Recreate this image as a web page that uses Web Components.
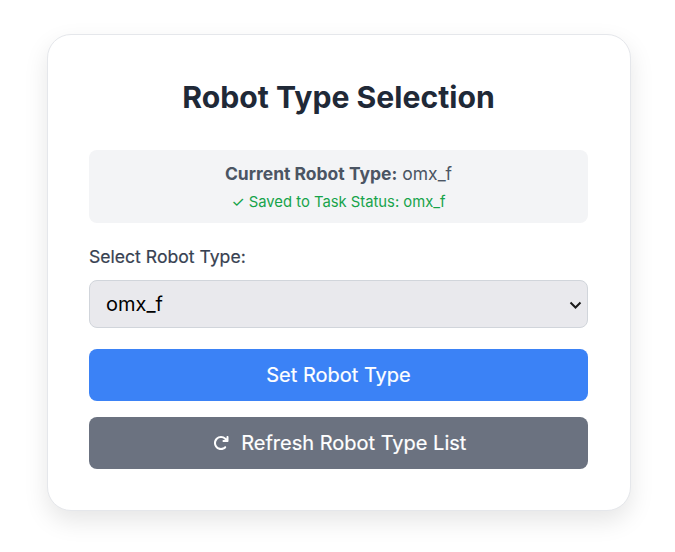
<!DOCTYPE html>
<html>
<head>
<meta charset="utf-8">
<style>
  body { margin: 0; background: #fff; font-family: Inter, "Liberation Sans", sans-serif; }
</style>
</head>
<body>
<robot-page></robot-page>
<script>
class StatusBox extends HTMLElement {
    constructor() {
        super();
        this.attachShadow({ mode: 'open' });
        this.shadowRoot.innerHTML = `
            <style>
                :host { display: block; background: #f3f4f6; border-radius: 8px; height: 73px; box-sizing: border-box; padding-top: 12px; text-align: center; }
                .current { font-size: 17.5px; line-height: 24px; color: #4b5563; }
                .current b { font-weight: 700; }
                .saved { margin-top: 4px; font-size: 14.8px; line-height: 24px; color: #16a34a; }
            </style>
            <div class="current"><b>Current Robot Type:</b> <slot></slot></div>
            <div class="saved">✓ Saved to Task Status: <slot name="saved"></slot></div>
        `;
    }
}
customElements.define('status-box', StatusBox);

class ActionButton extends HTMLElement {
    constructor() {
        super();
        this.attachShadow({ mode: 'open' });
        this.shadowRoot.innerHTML = `
            <style>
                :host { display: flex; align-items: center; justify-content: center; gap: 10.5px; height: 52px; border-radius: 8px; background: var(--bg); color: #fff; font-size: 20px; font-weight: 400; -webkit-text-stroke: 0.2px #fff; }
                ::slotted(svg) { display: block; margin: 0 2px; }
            </style>
            <slot name="icon"></slot><span><slot></slot></span>
        `;
    }
}
customElements.define('action-button', ActionButton);

class RobotPage extends HTMLElement {
    constructor() {
        super();
        this.attachShadow({ mode: 'open' });
        this.shadowRoot.innerHTML = `
            <style>
                :host { display: block; box-sizing: border-box; min-height: 552px; padding: 34px 44px 0 47px; }
                .card { background: #fff; border: 1px solid #e5e7eb; border-radius: 24px; box-shadow: 0 10px 25px rgba(0,0,0,.1); padding: 41px 42px 41px 41px; display: flex; flex-direction: column; }
                h1 { margin: 0; font-size: 30.2px; line-height: 42px; font-weight: 700; color: #1f2937; text-align: center; }
                status-box { margin-top: 32px; }
                label { margin-top: 22px; font-size: 17.6px; line-height: 24px; font-weight: 400; color: #374151; -webkit-text-stroke: 0.2px #374151; }
                .field { position: relative; margin-top: 11px; }
                select { display: block; appearance: none; height: 48px; width: 100%; padding: 0 16px; font: 400 20px Inter, sans-serif; color: #000; background: #e9e9ed; border: 1px solid #d1d5db; border-radius: 8px; }
                .field svg { position: absolute; right: 6px; top: 21px; }
                .set { margin-top: 21px; --bg: #3b82f6; }
                .refresh { margin-top: 16px; --bg: #6b7280; }
            </style>
            <div class="card">
                <h1>Robot Type Selection</h1>
                <status-box>omx_f<span slot="saved">omx_f</span></status-box>
                <label for="type">Select Robot Type:</label>
                <div class="field">
                    <select id="type"><option>omx_f</option></select>
                    <svg width="13" height="8" viewBox="0 0 13 8" fill="none" stroke="#1a1a1a" stroke-width="2"><path d="M1.5 1.5l5 5 5-5"/></svg>
                </div>
                <action-button class="set">Set Robot Type</action-button>
                <action-button class="refresh">
                    <svg slot="icon" width="16" height="16" viewBox="0 0 512 512" fill="#fff"><path d="M386.3 160H336c-17.7 0-32 14.3-32 32s14.3 32 32 32H464c17.7 0 32-14.3 32-32V64c0-17.7-14.3-32-32-32s-32 14.3-32 32v51.2L414.4 97.6c-87.5-87.5-229.3-87.5-316.8 0s-87.5 229.3 0 316.8s229.3 87.5 316.8 0c12.5-12.5 12.5-32.8 0-45.3s-32.8-12.5-45.3 0c-62.5 62.5-163.8 62.5-226.3 0s-62.5-163.8 0-226.3s163.8-62.5 226.3 0L386.3 160z"/></svg>
                    Refresh Robot Type List
                </action-button>
            </div>
        `;
    }
}
customElements.define('robot-page', RobotPage);
</script>
</body>
</html>
